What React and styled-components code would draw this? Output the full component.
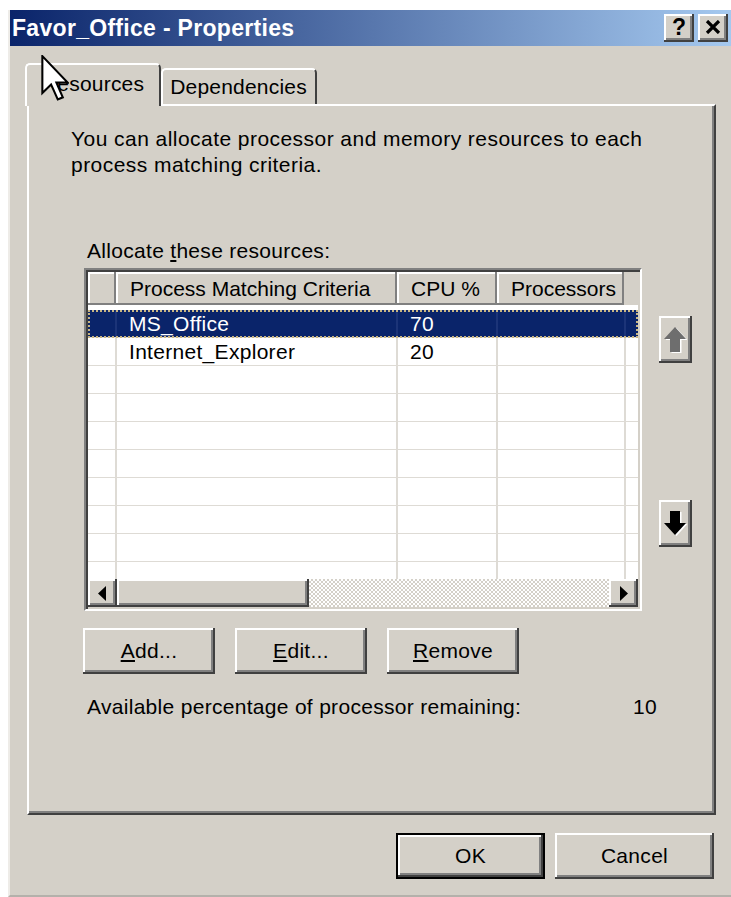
import React from "react";
import styled, { createGlobalStyle, css } from "styled-components";

const FACE = "#d4d0c8";
const SHADOW = "#808080";
const DARK = "#404040";
const HILITE = "#ffffff";
const NAVY = "#0a246a";
const GRID = "#dedbd5";

const GlobalStyle = createGlobalStyle`
  html, body { margin: 0; padding: 0; background: #ffffff; overflow: hidden; }
  body { font-family: "Liberation Sans", Arial, sans-serif; color: #000; }
  #root { width: 731px; height: 897px; overflow: hidden; }
`;

const raised = css`
  box-shadow: inset -2px -2px 0 ${DARK}, inset 2px 2px 0 ${HILITE},
    inset -4px -4px 0 ${SHADOW};
`;

const Window = styled.div`
  position: relative;
  box-sizing: border-box;
  margin: 10px 0 0 8px;
  width: 728px;
  height: 887px;
  background: ${FACE};
  border-left: 2px solid #eeece8;
  border-bottom: 2px solid #b4b1ab;
  display: flex;
  flex-direction: column;
`;

const TitleBar = styled.div`
  height: 36px;
  flex: none;
  display: flex;
  align-items: center;
  padding: 0 8px 0 2px;
  background: linear-gradient(to right, ${NAVY}, #a6caf0);
`;

const TitleText = styled.div`
  flex: 1;
  color: #fff;
  font-weight: bold;
  font-size: 23px;
  letter-spacing: 0.3px;
`;

const CaptionButtons = styled.div`
  display: flex;
  gap: 4px;
`;

const CaptionButton = styled.div`
  width: 30px;
  height: 28px;
  box-sizing: border-box;
  background: ${FACE};
  ${raised};
  display: flex;
  align-items: center;
  justify-content: center;
  font-weight: bold;
  font-size: 23px;
  padding-bottom: 2px;
`;

const Body = styled.div`
  flex: 1;
  display: flex;
  flex-direction: column;
  padding: 17px 20px 0 17px;
`;

const TabStrip = styled.div`
  height: 41px;
  flex: none;
  display: flex;
  align-items: flex-end;
  margin-left: -2px;
`;

const Tab = styled.div`
  position: relative;
  z-index: ${(p) => (p.$active ? 2 : 1)};
  box-sizing: border-box;
  height: ${(p) => (p.$active ? 43 : 36)}px;
  margin-bottom: ${(p) => (p.$active ? -2 : 0)}px;
  padding: ${(p) => (p.$active ? "7px 15px 0 15px" : "5px 8px 0 7px")};
  background: ${FACE};
  border-top: 2px solid ${HILITE};
  border-left: 2px solid ${HILITE};
  border-right: 2px solid ${DARK};
  border-radius: 5px 5px 0 0;
  font-size: 21px;
  line-height: 24px;
  letter-spacing: 0.2px;
  white-space: nowrap;
`;

const TabPanel = styled.div`
  position: relative;
  z-index: 1;
  box-sizing: border-box;
  height: 711px;
  flex: none;
  border-top: 2px solid ${HILITE};
  border-left: 2px solid ${HILITE};
  border-right: 2px solid ${DARK};
  border-bottom: 2px solid ${DARK};
  box-shadow: inset -2px -2px 0 ${SHADOW};
  display: flex;
  flex-direction: column;
  font-size: 21px;
  letter-spacing: 0.3px;
`;

const Intro = styled.p`
  margin: 20px 0 0 42px;
  width: 610px;
  line-height: 26px;
  letter-spacing: 0.45px;
`;

const Label = styled.div`
  margin: 61px 0 0 58px;
  line-height: 24px;
`;

const ListArea = styled.div`
  margin: 5px 0 0 55px;
  display: flex;
  align-items: flex-start;
`;

const ListView = styled.div`
  box-sizing: border-box;
  width: 558px;
  height: 343px;
  background: #fff;
  border-top: 2px solid ${SHADOW};
  border-left: 2px solid ${SHADOW};
  border-right: 2px solid ${HILITE};
  border-bottom: 2px solid ${HILITE};
  box-shadow: inset 2px 2px 0 ${DARK}, inset -2px -2px 0 ${FACE};
  padding: 2px;
  display: flex;
  flex-direction: column;
`;

const Header = styled.div`
  height: 33px;
  flex: none;
  display: flex;
  background: ${FACE};
`;

const HeaderCell = styled.div`
  box-sizing: border-box;
  width: ${(p) => (p.$w ? `${p.$w}px` : "auto")};
  flex: ${(p) => (p.$w ? "none" : 1)};
  padding-left: 14px;
  line-height: 33px;
  letter-spacing: 0;
  white-space: nowrap;
  overflow: hidden;
  box-shadow: ${(p) =>
    p.$w ? `inset -2px -2px 0 ${SHADOW}, inset 2px 2px 0 ${HILITE}` : "none"};
`;

const Rows = styled.div`
  flex: 1;
  overflow: hidden;
  padding-top: 5px;
`;

const Row = styled.div`
  box-sizing: border-box;
  height: 28px;
  display: flex;
  border-bottom: 1px solid ${GRID};
  background: ${(p) => (p.$selected ? NAVY : "#fff")};
  color: ${(p) => (p.$selected ? "#fff" : "#000")};
  outline: ${(p) => (p.$selected ? "2px dotted #c8b583" : "none")};
  outline-offset: -2px;
`;

const Cell = styled.div`
  box-sizing: border-box;
  width: ${(p) => (p.$w ? `${p.$w}px` : "auto")};
  flex: ${(p) => (p.$w ? "none" : 1)};
  padding-left: 12px;
  line-height: 27px;
  white-space: nowrap;
  overflow: hidden;
  border-right: ${(p) => (p.$w ? `2px solid ${p.$sel ? "#1c3478" : GRID}` : "none")};
`;

const ScrollBar = styled.div`
  height: 28px;
  flex: none;
  display: flex;
`;

const ScrollArrow = styled.div`
  box-sizing: border-box;
  width: 29px;
  flex: none;
  background: ${FACE};
  ${raised};
  display: flex;
  align-items: center;
  justify-content: center;
`;

const ScrollThumb = styled.div`
  width: 192px;
  flex: none;
  background: ${FACE};
  ${raised};
`;

const ScrollTrack = styled.div`
  flex: 1;
  background-color: #fff;
  background-image: conic-gradient(${FACE} 25%, #fff 0 50%, ${FACE} 0 75%, #fff 0);
  background-size: 4px 4px;
`;

const SideButtons = styled.div`
  margin-left: 17px;
  padding-top: 48px;
  display: flex;
  flex-direction: column;
  gap: 137px;
`;

const SideButton = styled.div`
  width: 33px;
  height: 47px;
  box-sizing: border-box;
  background: ${FACE};
  ${raised};
  display: flex;
  align-items: center;
  justify-content: center;
`;

const ActionRow = styled.div`
  margin: 17px 0 0 54px;
  display: flex;
  gap: 20px;
`;

const PushButton = styled.div`
  box-sizing: border-box;
  width: ${(p) => p.$w || 132}px;
  height: 46px;
  background: ${FACE};
  ${raised};
  border: ${(p) => (p.$default ? "2px solid #000" : "none")};
  display: flex;
  align-items: center;
  justify-content: center;
  font-size: 21px;
  letter-spacing: 0.3px;
`;

const RemainingRow = styled.div`
  margin: 21px 57px 0 58px;
  display: flex;
  justify-content: space-between;
  line-height: 24px;
`;

const Footer = styled.div`
  display: flex;
  justify-content: flex-end;
  gap: 10px;
  margin: 18px 2px 0 0;
`;

const Cursor = styled.svg`
  position: absolute;
  left: 31px;
  top: 45px;
  z-index: 5;
`;

const columns = [29, 281, 100, 128, 0];

const rows = [
  ["", "MS_Office", "70", ""],
  ["", "Internet_Explorer", "20", ""],
  ...Array.from({ length: 8 }, () => ["", "", "", ""]),
];

function UpArrowIcon() {
  const pts = "11,0 22,12 16,12 16,25 6,25 6,12 0,12";
  return (
    <svg width="23" height="26" viewBox="0 0 23 26">
      <polygon points={pts} fill="#fff" transform="translate(1.5 1)" />
      <polygon points={pts} fill="#6e6e6e" />
    </svg>
  );
}

function DownArrowIcon() {
  const pts = "6,0 16,0 16,12 22,12 11,24 0,12 6,12";
  return (
    <svg width="23" height="26" viewBox="0 0 23 26">
      <polygon points={pts} fill="#fff" transform="translate(1.5 1)" />
      <polygon points={pts} fill="#000" />
    </svg>
  );
}

function CloseGlyph() {
  return (
    <svg width="16" height="14" viewBox="0 0 16 14">
      <path d="M2 1 L14 13 M14 1 L2 13" stroke="#000" strokeWidth="3.2" />
    </svg>
  );
}

export default function App() {
  return (
    <>
      <GlobalStyle />
      <Window>
        <TitleBar>
          <TitleText>Favor_Office - Properties</TitleText>
          <CaptionButtons>
            <CaptionButton>?</CaptionButton>
            <CaptionButton>
              <CloseGlyph />
            </CaptionButton>
          </CaptionButtons>
        </TitleBar>

        <Body>
          <TabStrip>
            <Tab $active>Resources</Tab>
            <Tab>Dependencies</Tab>
          </TabStrip>

          <TabPanel>
            <Intro>
              You can allocate processor and memory resources to each process
              matching criteria.
            </Intro>
            <Label>
              Allocate <u>t</u>hese resources:
            </Label>

            <ListArea>
              <ListView>
                <Header>
                  <HeaderCell $w={28} />
                  <HeaderCell $w={281}>Process Matching Criteria</HeaderCell>
                  <HeaderCell $w={100}>CPU %</HeaderCell>
                  <HeaderCell $w={127}>Processors</HeaderCell>
                  <HeaderCell />
                </Header>
                <Rows>
                  {rows.map((r, i) => (
                    <Row key={i} $selected={i === 0}>
                      {columns.map((w, c) => (
                        <Cell key={c} $w={w} $sel={i === 0}>
                          {r[c] || ""}
                        </Cell>
                      ))}
                    </Row>
                  ))}
                </Rows>
                <ScrollBar>
                  <ScrollArrow>
                    <svg width="9" height="15" viewBox="0 0 9 15">
                      <polygon points="8,0 8,15 0,7.5" fill="#000" />
                    </svg>
                  </ScrollArrow>
                  <ScrollThumb />
                  <ScrollTrack />
                  <ScrollArrow>
                    <svg width="9" height="15" viewBox="0 0 9 15">
                      <polygon points="1,0 1,15 9,7.5" fill="#000" />
                    </svg>
                  </ScrollArrow>
                </ScrollBar>
              </ListView>

              <SideButtons>
                <SideButton>
                  <UpArrowIcon />
                </SideButton>
                <SideButton>
                  <DownArrowIcon />
                </SideButton>
              </SideButtons>
            </ListArea>

            <ActionRow>
              <PushButton>
                <span>
                  <u>A</u>dd...
                </span>
              </PushButton>
              <PushButton>
                <span>
                  <u>E</u>dit...
                </span>
              </PushButton>
              <PushButton>
                <span>
                  <u>R</u>emove
                </span>
              </PushButton>
            </ActionRow>

            <RemainingRow>
              <span>Available percentage of processor remaining:</span>
              <span>10</span>
            </RemainingRow>
          </TabPanel>

          <Footer>
            <PushButton $default $w={149}>
              OK
            </PushButton>
            <PushButton $w={159}>Cancel</PushButton>
          </Footer>
        </Body>

        <Cursor width="28" height="46" viewBox="0 0 12 20">
          <polygon
            points="0.5,0.5 0.5,16.5 4.3,12.8 7.2,19.3 9.4,18.4 6.6,12 11.5,12"
            fill="#fff"
            stroke="#000"
            strokeWidth="0.9"
            strokeLinejoin="miter"
          />
        </Cursor>
      </Window>
    </>
  );
}
